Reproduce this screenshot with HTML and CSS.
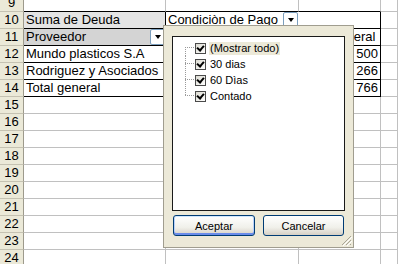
FILE: index.html
```html
<!DOCTYPE html>
<html lang="es">
<head>
    <meta charset="UTF-8">
    <title>Tabla dinámica - Deuda</title>
    <link rel="stylesheet" href="styles.css">
</head>
<body>
    <div class="sheet">
        <div class="hdr">9</div><div class="cell bb"></div><div class="cell bb"></div><div class="cell bb"></div><div class="cell"></div>

        <div class="hdr">10</div>
        <div class="cell field bb br">Suma de Deuda</div>
        <div class="cell bb nobr"><span>Condiciòn de Pago</span><span class="drop"></span></div>
        <div class="cell bb br"></div>
        <div class="cell"></div>

        <div class="hdr">11</div>
        <div class="cell field dark bb br"><span>Proveedor</span><span class="drop"></span></div>
        <div class="cell bb br"></div>
        <div class="cell bb br">Total general</div>
        <div class="cell"></div>

        <div class="hdr">12</div>
        <div class="cell bb br">Mundo plasticos S.A</div>
        <div class="cell bb br"></div>
        <div class="cell num bb br">500</div>
        <div class="cell"></div>

        <div class="hdr">13</div>
        <div class="cell bb br">Rodriguez y Asociados</div>
        <div class="cell bb br"></div>
        <div class="cell num bb br">266</div>
        <div class="cell"></div>

        <div class="hdr">14</div>
        <div class="cell bb br">Total general</div>
        <div class="cell bb br"></div>
        <div class="cell num bb br">766</div>
        <div class="cell"></div>

        <div class="hdr">15</div><div class="cell"></div><div class="cell"></div><div class="cell"></div><div class="cell"></div>
        <div class="hdr">16</div><div class="cell"></div><div class="cell"></div><div class="cell"></div><div class="cell"></div>
        <div class="hdr">17</div><div class="cell"></div><div class="cell"></div><div class="cell"></div><div class="cell"></div>
        <div class="hdr">18</div><div class="cell"></div><div class="cell"></div><div class="cell"></div><div class="cell"></div>
        <div class="hdr">19</div><div class="cell"></div><div class="cell"></div><div class="cell"></div><div class="cell"></div>
        <div class="hdr">20</div><div class="cell"></div><div class="cell"></div><div class="cell"></div><div class="cell"></div>
        <div class="hdr">21</div><div class="cell"></div><div class="cell"></div><div class="cell"></div><div class="cell"></div>
        <div class="hdr">22</div><div class="cell"></div><div class="cell"></div><div class="cell"></div><div class="cell"></div>
        <div class="hdr">23</div><div class="cell"></div><div class="cell"></div><div class="cell"></div><div class="cell"></div>
        <div class="hdr">24</div><div class="cell"></div><div class="cell"></div><div class="cell"></div><div class="cell"></div>
    </div>

    <div class="filter-popup">
        <div class="filter-list">
            <div class="item selected"><span class="branch first"></span><span class="check"></span><span class="label">(Mostrar todo)</span></div>
            <div class="item"><span class="branch"></span><span class="check"></span><span class="label">30 dias</span></div>
            <div class="item"><span class="branch"></span><span class="check"></span><span class="label">60 Dìas</span></div>
            <div class="item"><span class="branch last"></span><span class="check"></span><span class="label">Contado</span></div>
        </div>
        <div class="filter-buttons">
            <button class="btn default">Aceptar</button>
            <button class="btn">Cancelar</button>
        </div>
        <svg class="grip" width="11" height="11" viewBox="0 0 11 11">
            <path d="M10 1 L1 10 M10 5 L5 10 M10 9 L9 10" stroke="#a8a596" stroke-width="1"/>
            <path d="M11 2 L2 11 M11 6 L6 11" stroke="#ffffff" stroke-width="1"/>
        </svg>
    </div>
</body>
</html>
```

FILE: styles.css
```css
body {
    margin: 0;
    position: relative;
    overflow: hidden;
    height: 264px;
    background-color: white;
    font-family: "Liberation Sans", Arial, sans-serif;
}
.sheet {
    display: grid;
    grid-template-columns: 24px 142px 133px 82px 1fr;
    grid-auto-rows: 17px;
    margin-top: -5px;
}
.hdr {
    box-sizing: border-box;
    background-color: #ebe9d8;
    border-right: 1px solid #9d9a8c;
    border-bottom: 1px solid #c5c2b2;
    font-size: 13px;
    line-height: 16px;
    text-align: center;
    color: #000;
}
.cell {
    box-sizing: border-box;
    border-right: 1px solid #c0c0c0;
    border-bottom: 1px solid #c0c0c0;
    font-size: 13px;
    line-height: 16px;
    padding: 0 0 0 2px;
    white-space: nowrap;
    display: flex;
    justify-content: space-between;
    color: #000;
}
.cell.num {
    justify-content: flex-end;
    padding: 0 2px 0 0;
}
.bb {
    border-bottom-color: #000;
}
.br {
    border-right-color: #000;
}
.nobr {
    border-right-color: white;
}
.field {
    background-color: #e4e4e4;
}
.field.dark {
    background-color: #d4d4d4;
}
.drop {
    box-sizing: border-box;
    width: 15px;
    height: 16px;
    background-color: white;
    border: 1px solid #7b9ebd;
    border-radius: 2px;
    display: flex;
    align-items: center;
    justify-content: center;
}
.drop::after {
    content: "";
    border-left: 3px solid transparent;
    border-right: 3px solid transparent;
    border-top: 4px solid #000;
}

/* autofilter popup over the sheet */
.filter-popup {
    position: absolute;
    left: 163px;
    top: 25px;
    width: 191px;
    height: 223px;
    box-sizing: border-box;
    padding: 10px 8px 0 8px;
    background-color: #ece9d8;
    border: 1px solid #a09d8f;
    font-size: 11px;
}
.filter-list {
    box-sizing: border-box;
    height: 175px;
    background-color: white;
    border: 1px solid #1a1a1a;
    padding: 3px 0 0 12px;
}
.item {
    display: flex;
    align-items: center;
    height: 16px;
}
.branch {
    width: 10px;
    height: 16px;
    background-image:
        repeating-linear-gradient(to right, #9a9a9a 0 1px, transparent 1px 2px),
        repeating-linear-gradient(to bottom, #9a9a9a 0 1px, transparent 1px 2px);
    background-repeat: no-repeat;
    background-size: 10px 1px, 1px 16px;
    background-position: 0 7px, 0 0;
}
.branch.first {
    background-size: 10px 1px, 1px 9px;
    background-position: 0 7px, 0 7px;
}
.branch.last {
    background-size: 10px 1px, 1px 8px;
    background-position: 0 7px, 0 0;
}
.check {
    box-sizing: border-box;
    width: 11px;
    height: 11px;
    margin-top: 1px;
    border: 1px solid #4a4a4a;
    background: linear-gradient(135deg, #dcdbd2, #ffffff);
    position: relative;
}
.check::after {
    content: "";
    position: absolute;
    left: 2px;
    top: 0px;
    width: 3px;
    height: 5px;
    border-right: 2px solid #000;
    border-bottom: 2px solid #000;
    transform: rotate(40deg);
}
.label {
    margin-left: 3px;
    padding: 0 1px;
    line-height: 13px;
    color: #000;
}
.item.selected .label {
    background-color: #ece9d8;
}
.filter-buttons {
    display: flex;
    gap: 8px;
    padding-left: 1px;
    margin-top: 4px;
}
.btn {
    box-sizing: border-box;
    width: 82px;
    height: 21px;
    padding: 0;
    font-family: "Liberation Sans", Arial, sans-serif;
    font-size: 11px;
    color: #000;
    border: 1px solid #003c74;
    border-radius: 3px;
    background: linear-gradient(to bottom, #ffffff, #f0f0ea 60%, #d6d0c5);
}
.btn + .btn {
    width: 81px;
}
.btn.default {
    box-shadow: inset 0 -2px 0 #6a8cea, inset 0 1px 0 #cee7ff, inset 1px 0 0 #b9d1fa, inset -1px 0 0 #b9d1fa;
}
.grip {
    position: absolute;
    right: 1px;
    bottom: 1px;
}
```
